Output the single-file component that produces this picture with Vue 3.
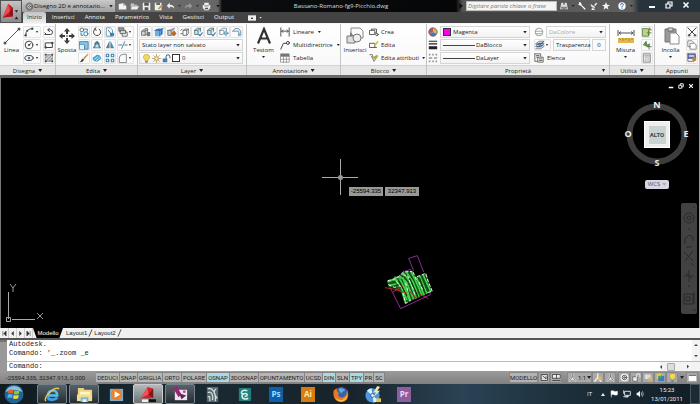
<script setup>
import { h, ref } from 'vue'

const g = (body, color = '#4a4f55', w = 1) =>
  `<g fill="none" stroke="${color}" stroke-width="${w}" stroke-linecap="round" stroke-linejoin="round">${body}</g>`

const glyphs = {
  arc: g('<path d="M2 10C2 5 5 2 10 2"/>', '#3c4248', 1.2) + '<circle cx="2" cy="10" r="1.400" fill="#345"/><circle cx="10" cy="2" r="1.400" fill="#345"/><circle cx="4" cy="4.500" r="1.200" fill="#345"/>',
  pline: g('<path d="M1 9H8A2.800 2.800 0 0 0 8 3.500H5M3 9L1 7M6.500 1.500L4.500 3.500L6.500 5.500"/>', '#3c4248', 1.200),
  circle: g('<circle cx="6" cy="6" r="4.600"/><path d="M6 6L8.500 4"/>', '#3c4248', 1.200) + '<circle cx="6" cy="6" r="1.200" fill="#345"/>',
  rect: g('<path d="M2 3.500H10V9H2Z"/>', '#3c4248', 1.200) + '<circle cx="2" cy="9" r="1.400" fill="#345"/><circle cx="10" cy="3.500" r="1.400" fill="#345"/>',
  ellipse: g('<ellipse cx="6" cy="6" rx="5" ry="3"/>', '#3c4248', 1.200) + '<circle cx="6" cy="6" r="1.500" fill="#57a"/>',
  hatch: '<path d="M2 2H10V10H2Z" fill="#c9ccd0"/>' + g('<path d="M2 2H10V10H2ZM2 6L6 2M2 10L10 2M6 10L10 6"/>', '#777', 0.8) + '<path d="M1 1h2v2H1zM9 1h2v2H9zM1 9h2v2H1zM9 9h2v2H9z" fill="#444"/>',
  copy: g('<circle cx="3.500" cy="3.500" r="2.300"/>', '#555') + g('<circle cx="8.200" cy="8.200" r="2.500"/><path d="M7 2.500H10V5M2.500 7V10H4.500"/>', '#2b86b8', 1.2),
  rotate: g('<path d="M4 2.200A4.300 4.300 0 1 0 8.500 2.400M4.500 .800L3 2.600L5.200 3.800"/>', '#444', 1.2),
  mirror: g('<path d="M2 1H6.500L9 3.500V11H2Z"/>', '#4a90b8') + '<path d="M6 7h5v4H6z" fill="#3c8cba"/>' + g('<path d="M4 4L8 9"/>', '#555'),
  scale: '<path d="M1 2H11V11H1Z" fill="#8cc5e3"/>' + g('<path d="M1 2H11V11H1ZM1 6H6.500V11"/>', '#2f7ba8') + '<path d="M1 6h5v5H1z" fill="#dff2fb"/>',
  stretch: '<path d="M1 10L3 6V3.500L6 1L9 3.500V6L11 10Z" fill="#54788e"/><path d="M3.500 9L5 5H7L8.500 9Z" fill="#b9e0f2"/>',
  triangle: '<path d="M5.500 1V10H1Z" fill="#777"/><path d="M6.500 1V10H11Z" fill="#3c8cba"/>',
  brush: '<path d="M10.500 1L5 6L6.500 7.500L11.300 1.800Z" fill="#c48a34"/><path d="M1 11L4.500 6.500L6.200 8L4 10.500Z" fill="#333"/>',
  cloud: '<path d="M1 8C0 5 3 4 4 4C5 1 10 2 10 4.500C12 6 11 8 9 8.500C7 11 3 11 1 8Z" fill="#4aa3cf"/>' + g('<path d="M3 7.500L7 4.500M5 9L9 6"/>', '#d9f1fb'),
  array: g('<path d="M1.500 1.500h3v3h-3zM7.500 1.500h3v3h-3zM1.500 7.500h3v3h-3zM7.500 7.500h3v3h-3z"/>', '#3684b0', 1.3),
  stack: '<path d="M1 1H7V5H1Z" fill="#a0a4a8"/><path d="M3 4H9V8H3Z" fill="#d4d6d8"/>' + g('<path d="M1 1H7V4M1 1V5H3M3 4H9V8H3ZM9 6H11V11H5V8"/>', '#555'),
  trim: g('<path d="M1 6H4.500M8 6H11"/>', '#555') + g('<path d="M4.500 10L8 2"/>', '#3c8cba', 1.2),
  fillet: g('<path d="M1.500 11V6A5 5 0 0 1 6.500 1.500H10V11Z"/>', '#777'),
  layers: '<path d="M1 5L5 2H8V8L5 10H1Z" fill="#d0d3d5"/>' + g('<path d="M1 5L5 2H8V8L5 10H1ZM5 3.500V10M1 5H5L8 3"/>', '#666') + '<path d="M7 6h4v5H7z" fill="#777"/>',
  layerBlue: '<path d="M1 4L5 1.500H11V8L7 11H1Z" fill="#75aee0"/>' + g('<path d="M1 4H7V11M7 4L11 1.500M3 3L9 3.200V9"/>', '#3b5f96'),
  layerOrange: '<path d="M1 4L5 1.500H9V7L5 10H1Z" fill="#ced0d2"/>' + g('<path d="M1 4H5V10M5 4L9 1.500M1 4V10H5"/>', '#666') + '<path d="M6 6L9 4.500L11.500 8L8.500 11L6 10Z" fill="#b76b2c"/>',
  layerKey: g('<path d="M4 4H8L10 2.500V8L8 10H4ZM8 4V10M4 4L6 2.500H10M1 4L2.500 2.500M1 8H3"/>', '#666'),
  layerCheck: '<path d="M2 4L5 1.500H9V6L6 9H2Z" fill="#d0e2ea"/>' + g('<path d="M2 4H6V9M6 4L9 1.500M2 4V9H6M2 4L5 1.500H9V5"/>', '#577') + g('<path d="M7 9L8.500 10.500L11 7"/>', '#2b7fb0', 1.4),
  layerSun: g('<path d="M1 4L4 1.500H9V4M1 4H6V9M1 4V9H4"/>', '#789') + g('<circle cx="8.500" cy="7.500" r="2"/><path d="M8.500 4.500V11M5.500 7.500H11.500"/>', '#4a94b8', 0.8),
  layerLock: g('<path d="M1 5L3.500 2H8L10.500 5V9M1 5H8V8"/>', '#6c93b5', 1.2) + '<path d="M7 7h4v4H7z" fill="#8bb3cc"/>',
  bulb: '<path d="M6 .500A3.700 3.700 0 0 0 4 7.500V9H8V7.500A3.700 3.700 0 0 0 6 .500Z" fill="#f7d957" stroke="#a98d33" stroke-width=".7"/><path d="M4.300 9.500H7.700V11.500H4.300Z" fill="#777"/>',
  sun: '<circle cx="6" cy="6" r="2.500" fill="#fff2a0" stroke="#9a7b30"/>' + g('<path d="M6 .800V2M6 10V11.200M.800 6H2M10 6H11.200M2.300 2.300L3.200 3.200M8.800 8.800L9.700 9.700M9.700 2.300L8.800 3.200M3.200 8.800L2.300 9.700"/>', '#a5803a'),
  unlock: '<path d="M1 6H7V11H1Z" fill="#3b83b4"/>' + g('<path d="M5.500 6V3.500A2.300 2.300 0 0 1 10.500 3.500V5"/>', '#456', 1.3),
  dim: g('<path d="M1 1V11M11 1V11M2 5H10M3.500 3.500L2 5L3.500 6.500M8.500 3.500L10 5L8.500 6.500"/>', '#555', 1.2),
  leader: g('<path d="M1 11L4 4H7"/><circle cx="9.500" cy="3.500" r="1.800"/>', '#444', 1.2),
  table: '<path d="M1 1H11V11H1Z" fill="#fff"/><path d="M1 1H11V4H1Z" fill="#777"/>' + g('<path d="M1 1H11V11H1ZM1 4H11M1 7.500H11M4.300 4V11M7.700 4V11"/>', '#777', 0.8),
  blockNew: g('<path d="M1 4H7V9H1ZM3 4V2.500H9V7H7"/><circle cx="9.500" cy="9" r="1.500"/>', '#555', 1.1),
  blockEdit: g('<path d="M1 4H7V9H1ZM7 9H9"/>', '#555', 1.1) + '<path d="M6 6L10 1L11.500 2.500L8 7Z" fill="#d7c43c"/>',
  blockAttr: g('<path d="M1 2L4 2L5 6M3 4L6 10L8 7"/>', '#666') + '<path d="M4 5L10 2L11 4L8 8Z" fill="#a9ae3d"/>',
  wheel: '<path d="M6 6V1A5 5 0 0 1 10.500 8.500Z" fill="#e0b63a"/><path d="M6 6L10.500 8.500A5 5 0 0 1 1.500 8.500Z" fill="#4775c0"/><path d="M6 6L1.500 8.500A5 5 0 0 1 6 1Z" fill="#c05252"/><circle cx="6" cy="6" r="5" fill="none" stroke="#666"/>',
  weight: '<path d="M1 1h10v1H1zM1 4h10v1.500H1zM1 7.500h10v3.500H1z" fill="#222"/>',
  ltype: '<path d="M1 1h2v2H1zM5 1h2v2H5zM9 1h2v2H9zM1 5h4v2H1zM7 5h4v2H7zM1 9h2v2H1zM5 9h2v2H5zM9 9h2v2H9z" fill="#999"/>',
  globe: g('<circle cx="6" cy="6" r="4.500"/><path d="M1.500 5H10.500M2 8H10"/>', '#a8a8a8', 1.3),
  sheets: '<path d="M1 9L5 6H11L7 9ZM1 6L5 3H11L7 6Z" fill="#64a0c4"/>' + g('<path d="M1 10.500H7L11 7.500M1 7.500L5 4.500H11L7 7.500ZM1 4.500L5 1.500H11L7 4.500Z"/>', '#446', 0.8),
  list: g('<path d="M1 1H8V4M1 1V10H4M3 3H6M3 5H5M5 5H11V11H5ZM6.500 7H9.500M6.500 9H9.500"/>', '#555'),
  select: '<path d="M1 2H8V11H1Z" fill="#b9d785"/>' + g('<path d="M1 2H8V11H1ZM6 7H11M8.500 4.500V9.500"/>', '#58753b') + '<path d="M9 0L12 4H8Z" fill="#a78b2a"/>',
  quick: '<path d="M1 6L5 1L6 5L10 4L8 9Z" fill="#75a65d"/>' + g('<path d="M2 6L5 2V7M6 8H11M8.500 5.500V11"/>', '#4f6748'),
  calc: '<path d="M2 1H10V11H2Z" fill="#eee"/>' + g('<path d="M2 1H10V11H2ZM3.500 3.500H8.500M4 6H4.200M6 6H6.200M8 6H8.200M4 8.500H4.200M6 8.500H6.200M8 8.500H8.200"/>', '#777'),
  cut: g('<path d="M1 1L9.500 9.500M11 1L2.500 9.500"/><circle cx="2.500" cy="10" r="1"/><circle cx="9.500" cy="10" r="1"/>', '#444', 1.2),
  pages: '<path d="M1 1H6L8 3V8H1ZM4 4H9L11 6V11H4Z" fill="#fff"/>' + g('<path d="M8 3L6 1H1V8H4M4 4H9L11 6V11H4Z"/>', '#777'),
  match: '<path d="M1 1H10V7H1Z" fill="#55a"/><path d="M2 2h7v3H2z" fill="#aac8e8"/><path d="M6 7L11 3V9L7 11Z" fill="#bf853e"/>' + g('<path d="M1 1H10V5M1 1V10H6"/>', '#556'),
  gear: '<circle cx="6" cy="6" r="4" fill="#ddd"/>' + g('<circle cx="6" cy="6" r="4.700" stroke-dasharray="1.500 1.400"/><circle cx="6" cy="6" r="3.500"/><circle cx="6" cy="6" r="1.300"/>', '#444'),
  newFile: '<path d="M1 2.500L7 1.500L11 5V10H1Z" fill="#f2f2f2"/><path d="M7 1.500V5H11" fill="#aaa"/>',
  open: '<path d="M1 2H5L6 3.500H10V5H3L1 9Z" fill="#c8c8c8"/><path d="M3 5.500H12L9.500 10H1Z" fill="#eee"/>',
  save: '<path d="M1 1H11V11H1Z" fill="#eee"/><path d="M3 1h6v4H3zM3.500 7h5v4h-5z" fill="#555"/>',
  saveAs: '<path d="M1 1H10V11H1Z" fill="#eee"/><path d="M3 1h5v3H3z" fill="#666"/><path d="M5 9L10 3L12 5L7 10Z" fill="#c69b4b"/>',
  undo: '<path d="M1 5L5 1V3.500C9 3.500 11 5 11 9C9 6.500 8 6.300 5 6.500V9Z" fill="#f0f0f0"/>',
  redo: '<path d="M11 5L7 1V3.500C3 3.500 1 5 1 9C3 6.500 4 6.300 7 6.500V9Z" fill="#999"/>',
  print: '<path d="M3 1H9V4H11V9H9V11H3V9H1V4H3Z" fill="#eee"/><path d="M3 4.500h6v1H3zM4 7.500h4v2H4z" fill="#555"/>',
  binoc: '<path d="M2 1H5V4H7V1H10L12 11H7V7H5V11H0Z" fill="#ddd"/><path d="M2 7h2v3H2zM8 7h2v3H8z" fill="#555"/>',
  wrench: '<path d="M1 1L3 0L5 2L5.500 4.500L11.500 10L10 11.500L4.500 5.500L2 5L0 3L2 3Z" fill="#fff"/>',
  dish: '<path d="M1 3L8 8C5 10 1 8 1 3ZM6 5L9 1L11 2L8 6ZM3 9L7 10V12H2Z" fill="#eee"/>',
  star: '<path d="M6 0L7.600 4.200L12 4.400L8.500 7.200L9.700 11.500L6 9L2.300 11.500L3.500 7.200L0 4.400L4.400 4.200Z" fill="#f4f4f4"/>',
  help: '<circle cx="6" cy="6" r="5.500" fill="#fff"/>' + g('<path d="M4 4.300A2 2 0 1 1 6.800 6Q6 6.400 6 7.500M6 9.200V9.400"/>', '#2566a8', 1.5),
  viewMax: '<path d="M0 2h12v8H0z" fill="#eee"/><path d="M4 7.500L6 4.500L8 7.500Z" fill="#333"/>',
  paper: '<path d="M2 2H10V10H2Z" fill="#ddd"/>' + g('<path d="M2 2H10V10H2ZM4 4L8 8V5"/>', '#333'),
  viewports: '<path d="M1 2H11V7H1Z" fill="#eee"/>' + g('<path d="M1 2H11V7H1ZM6 2V7M1 10H11"/>', '#333'),
  compass: g('<path d="M6 1V5L2 10.500M6 5L10 10.500M3.500 8H8.500"/>', '#eee', 2) + g('<path d="M6 1V5L2 10.500M6 5L10 10.500"/>', '#444', 0.8),
  annoSun: g('<path d="M5 1V6L1 11M5 6L9 11"/>', '#eee', 1.8) + '<circle cx="8" cy="7" r="2.500" fill="#efb44d"/>',
  gearLight: '<circle cx="6" cy="6" r="5.300" fill="#eee"/>' + g('<circle cx="6" cy="6" r="3"/><circle cx="6" cy="6" r="1"/>', '#555', 1.2),
  lockLight: '<path d="M1 5H7V11H1Z" fill="#eee" stroke="#555"/>' + g('<path d="M6 5V3A2.200 2.200 0 0 1 10.500 3V5"/>', '#eee', 1.3),
  tray: '<path d="M1 2H9V8H1Z" fill="#ddd"/><path d="M6 6H11V10H6Z" fill="#e6b14e"/>',
  shield: '<path d="M1 1H7V8H1Z" fill="#e7cb45"/><path d="M3 4H11V11H3Z" fill="#3c7cb4"/><path d="M3 4L8 3L6 8Z" fill="#52a454"/>',
  square: '<path d="M1 2H11V10.500H1Z" fill="#fff"/><path d="M1 2H11V4H1Z" fill="#777"/>',
  flag: '<path d="M2 1V11M2 1.500C5 0 7 4 11 2V7C7 9 5 5 2 7Z" fill="#fff" stroke="#fff"/>',
  net: g('<path d="M3 2H11V8H3ZM7 8V10.500H4M1 1V5M1 10H8"/>', '#e8eef2', 1.3),
  sound: '<path d="M1 4H3L6 1V11L3 8H1Z" fill="#fff"/>' + g('<path d="M8 4Q9.500 6 8 8M10 2.500Q12 6 10 9.500"/>', '#dfe7ec', 1)
}

const Ic = (props) =>
  h('svg', { class: 'ic', viewBox: '0 0 12 12', 'aria-hidden': 'true', innerHTML: glyphs[props.n] })
Ic.props = ['n']

const ribbonTabs = ['Inizio', 'Inserisci', 'Annota', 'Parametrico', 'Vista', 'Gestisci', 'Output']
const activeTab = ref('Inizio')

const layerTools = [
  ['layers', 'Proprietà layer'], ['layerBlue', 'Layer corrente'], ['layerOrange', 'Corrispondenza layer'], ['layerKey', 'Layer precedente'],
  ['layerCheck', 'Isola layer'], ['layerCheck', 'Congela layer'], ['layerSun', 'Scongela layer'], ['layerLock', 'Blocca layer']
]

const modes = ref([
  ['DEDUCI', 0], ['SNAP', 0], ['GRIGLIA', 0], ['ORTO', 0], ['POLARE', 0], ['OSNAP', 1], ['3DOSNAP', 0],
  ['OPUNTAMENTO', 0], ['UCSD', 0], ['DIN', 1], ['SLN', 0], ['TPY', 1], ['PR', 0], ['SC', 0]
].map(([name, on]) => ({ name, on: !!on })))

const command = ref('')
</script>

<template>
  <div class="app">
    <header class="top">
      <button class="logo" aria-label="Menu applicazione">
        <svg viewBox="0 0 22 22">
          <path d="M2 17L8 2L13 6V16Z" fill="#c3202a" />
          <path d="M8 2L10 10L2 17Z" fill="#ef4a4c" />
          <path d="M10 10L13 6V16L9 14Z" fill="#8d1119" />
          <path d="M2 17L9 13L12 16Z" fill="#a91620" />
          <path d="M15 9H19L17 11.500ZM15 19L17 16L19 19Z" fill="#222" />
        </svg>
      </button>
      <div class="bars">
        <div class="title-row">
          <div class="mode">
            <Ic n="gear" />
            <select class="pick" aria-label="Area di lavoro"><option>Disegno 2D e annotazio...</option></select>
          </div>
          <div class="quick">
            <button aria-label="Nuovo"><Ic n="newFile" /></button>
            <button aria-label="Apri"><Ic n="open" /></button>
            <button aria-label="Salva"><Ic n="save" /></button>
            <button aria-label="Salva con nome"><Ic n="saveAs" /></button>
            <button class="history-step" aria-label="Annulla"><Ic n="undo" /><i class="caret small"></i></button>
            <button class="history-step" aria-label="Ripeti"><Ic n="redo" /><i class="caret small"></i></button>
            <button aria-label="Stampa"><Ic n="print" /></button>
            <i class="caret dark"></i>
          </div>
          <h1>Bassano-Romano-fg9-Picchio.dwg</h1>
          <div class="search">
            <i class="play"></i>
            <input type="text" aria-label="Cerca" placeholder="Digitare parola chiave o frase">
          </div>
          <div class="helpers">
            <button aria-label="Trova"><Ic n="binoc" /></button>
            <i class="caret small"></i>
            <button aria-label="Strumenti"><Ic n="wrench" /></button>
            <button aria-label="Comunicazioni"><Ic n="dish" /></button>
            <button aria-label="Preferiti"><Ic n="star" /></button>
            <button class="guide" aria-label="Guida"><Ic n="help" /></button>
            <i class="caret small"></i>
          </div>
          <div class="win">
            <button aria-label="Riduci"><svg viewBox="0 0 8 8"><path d="M1 5H7V7H1Z" fill="#fff" /></svg></button>
            <button aria-label="Ripristina"><svg viewBox="0 0 8 8"><path d="M1 3H5V7H1ZM3 3V1H7V5H5" fill="none" stroke="#fff" stroke-width="1.200" /></svg></button>
            <button aria-label="Chiudi"><svg viewBox="0 0 8 8"><path d="M1.500 1.500L6.500 6.500M6.500 1.500L1.500 6.500" stroke="#fff" stroke-width="1.600" /></svg></button>
          </div>
        </div>
        <nav class="tabs">
          <button v-for="t in ribbonTabs" :key="t" :class="{ active: t === activeTab }" @click="activeTab = t">{{ t }}</button>
          <button class="view" aria-label="Riduci barra multifunzione"><Ic n="viewMax" /><i class="caret small"></i></button>
        </nav>
      </div>
    </header>

    <section class="ribbon">
      <div class="panel">
        <div class="body draw">
          <button class="big">
            <svg viewBox="0 0 18 18"><path d="M2 16L16 2" stroke="#555" /><circle cx="2" cy="16" r="1.500" fill="#555" /><circle cx="16" cy="2" r="1.500" fill="#555" /></svg>
            Linea
          </button>
          <div class="pairs">
            <button class="tool split" aria-label="Arco"><Ic n="arc" /><i class="caret"></i></button>
            <button class="tool" aria-label="Polilinea"><Ic n="pline" /></button>
            <button class="tool split" aria-label="Cerchio"><Ic n="circle" /><i class="caret"></i></button>
            <button class="tool" aria-label="Rettangolo"><Ic n="rect" /></button>
            <button class="tool split" aria-label="Ellisse"><Ic n="ellipse" /><i class="caret"></i></button>
            <button class="tool" aria-label="Tratteggio"><Ic n="hatch" /></button>
          </div>
        </div>
        <button class="name">Disegna <i class="caret"></i></button>
      </div>

      <div class="panel">
        <div class="body edit">
          <button class="big">
            <svg viewBox="0 0 18 18"><path d="M9 1L12 4.500H10V7H8V4.500H6ZM9 17L6 13.500H8V11H10V13.500H12ZM1 9L4.500 6V8H7V10H4.500V12ZM17 9L13.500 12V10H11V8H13.500V6Z" fill="#3c3c3c" /><circle cx="9" cy="9" r="1.200" fill="#999" /></svg>
            Sposta
          </button>
          <div class="quads">
            <button class="tool" aria-label="Copia"><Ic n="copy" /></button>
            <button class="tool" aria-label="Ruota"><Ic n="rotate" /></button>
            <button class="tool" aria-label="Specchio"><Ic n="mirror" /></button>
            <button class="tool split" aria-label="Ordine"><Ic n="stack" /><i class="caret"></i></button>
            <button class="tool" aria-label="Scala"><Ic n="scale" /></button>
            <button class="tool" aria-label="Stira"><Ic n="stretch" /></button>
            <button class="tool" aria-label="Rifletti"><Ic n="triangle" /></button>
            <button class="tool split" aria-label="Taglia"><Ic n="trim" /><i class="caret"></i></button>
            <button class="tool" aria-label="Cancella"><Ic n="brush" /></button>
            <button class="tool" aria-label="Offset"><Ic n="cloud" /></button>
            <button class="tool" aria-label="Serie"><Ic n="array" /></button>
            <button class="tool split" aria-label="Raccordo"><Ic n="fillet" /><i class="caret"></i></button>
          </div>
        </div>
        <button class="name">Edita <i class="caret"></i></button>
      </div>

      <div class="panel">
        <div class="body rows">
          <div class="strip">
            <button v-for="([n, label], i) in layerTools" :key="i" class="tool" :aria-label="label"><Ic :n="n" /></button>
          </div>
          <div class="field"><select class="pick" aria-label="Stato layer"><option>Stato layer non salvato</option></select></div>
          <div class="field">
            <Ic n="bulb" /><Ic n="sun" /><Ic n="unlock" /><i class="swatch white"></i>
            <select class="pick" aria-label="Layer corrente"><option>0</option></select>
          </div>
        </div>
        <button class="name">Layer <i class="caret"></i></button>
      </div>

      <div class="panel">
        <div class="body wide">
          <button class="big">
            <svg viewBox="0 0 18 18"><path d="M3 16.500L9 2L15 16.500M5 11.500H13" fill="none" stroke="#333" stroke-width="2.200" /></svg>
            Testom
            <i class="caret"></i>
          </button>
          <div class="list">
            <button><Ic n="dim" />Lineare<i class="caret"></i></button>
            <button><Ic n="leader" />Multidirettrice<i class="caret"></i></button>
            <button><Ic n="table" />Tabella</button>
          </div>
        </div>
        <button class="name">Annotazione <i class="caret"></i></button>
      </div>

      <div class="panel">
        <div class="body block">
          <button class="big">
            <svg viewBox="0 0 18 18"><path d="M5 1H14L17 4V11H5Z" fill="#fafafa" stroke="#888" /><path d="M1 9H9V16H1Z" fill="#ddd" stroke="#777" /><circle cx="11" cy="11" r="4" fill="#eee" stroke="#777" /><path d="M4 5L8 9L4 9Z" fill="#777" /></svg>
            Inserisci
          </button>
          <div class="list">
            <button><Ic n="blockNew" />Crea</button>
            <button><Ic n="blockEdit" />Edita</button>
            <button><Ic n="blockAttr" />Edita attributi<i class="caret"></i></button>
          </div>
        </div>
        <button class="name">Blocco <i class="caret"></i></button>
      </div>

      <div class="panel">
        <div class="body props">
          <div class="rows">
            <div class="line"><Ic n="wheel" /><div class="field"><i class="swatch magenta"></i><select class="pick" aria-label="Colore"><option>Magenta</option></select></div></div>
            <div class="line"><Ic n="weight" /><div class="field"><i class="stroke"></i><select class="pick" aria-label="Spessore linea"><option>DaBlocco</option></select></div></div>
            <div class="line"><Ic n="ltype" /><div class="field"><i class="stroke"></i><select class="pick" aria-label="Tipo di linea"><option>DaLayer</option></select></div></div>
          </div>
          <div class="rows">
            <div class="line"><Ic n="globe" /><div class="field off"><select class="pick" aria-label="Stile di stampa" disabled><option>DaColore</option></select></div></div>
            <div class="line">
              <button class="tool split" aria-label="Trasparenza layer"><Ic n="sheets" /><i class="caret"></i></button>
              <label class="field trans" for="transparency"><b></b>Trasparenza</label>
              <input id="transparency" class="amount" type="text" value="0">
            </div>
            <div class="list"><button><Ic n="list" />Elenca</button></div>
          </div>
        </div>
        <button class="name">Proprietà <i class="caret corner"></i></button>
      </div>

      <div class="panel">
        <div class="body side">
          <button class="big">
            <svg viewBox="0 0 18 18"><path d="M1 3V9M17 3V9M2 6H16M4 4.500L2 6L4 7.500M14 4.500L16 6L14 7.500" fill="none" stroke="#555" /><path d="M1 11H17V16H1Z" fill="#e2b64a" /><path d="M3 11V13M6 11V14M9 11V13M12 11V14M15 11V13" stroke="#a67c20" stroke-width=".8" /></svg>
            Misura
            <i class="caret"></i>
          </button>
          <div class="rows">
            <button class="tool" aria-label="Selezione"><Ic n="select" /></button>
            <button class="tool" aria-label="Selezione rapida"><Ic n="quick" /></button>
            <button class="tool" aria-label="Calcolatrice"><Ic n="calc" /></button>
          </div>
        </div>
        <button class="name">Utilità <i class="caret"></i></button>
      </div>

      <div class="panel">
        <div class="body side">
          <button class="big">
            <svg viewBox="0 0 18 18"><path d="M3 2H14V15H3Z" fill="#999" stroke="#777" /><path d="M6 1H11V4H6Z" fill="#ddd" stroke="#666" /><path d="M8 6H14L17 9V17H8Z" fill="#fdfdfd" stroke="#888" /></svg>
            Incolla
            <i class="caret"></i>
          </button>
          <div class="rows">
            <button class="tool" aria-label="Taglia"><Ic n="cut" /></button>
            <button class="tool" aria-label="Copia negli appunti"><Ic n="pages" /></button>
            <button class="tool" aria-label="Corrispondenza proprietà"><Ic n="match" /></button>
          </div>
        </div>
        <button class="name">Appunti</button>
      </div>
    </section>

    <main class="canvas">
      <div class="doc-buttons">
        <button aria-label="Riduci disegno"><svg viewBox="0 0 8 8"><path d="M1 5H7V7H1Z" fill="#fff" /></svg></button>
        <button aria-label="Ripristina disegno"><svg viewBox="0 0 8 8"><path d="M1 3H5V7H1ZM3 3V1H7V5H5" fill="none" stroke="#fff" stroke-width="1.200" /></svg></button>
        <button aria-label="Chiudi disegno"><svg viewBox="0 0 8 8"><path d="M1.500 1.500L6.500 6.500M6.500 1.500L1.500 6.500" stroke="#fff" stroke-width="1.500" /></svg></button>
      </div>

      <div class="viewcube">
        <svg viewBox="0 0 66 66"><circle cx="33" cy="33" r="27.500" fill="none" stroke="#3d3d3d" stroke-width="6" /></svg>
        <span class="n">N</span><span class="e">E</span><span class="s">S</span><span class="w">O</span>
        <button class="cube"><span>ALTO</span></button>
      </div>
      <button class="wcs">WCS <i></i></button>

      <div class="navbar">
        <svg viewBox="0 0 16 111" fill="none" stroke="#292929">
          <circle cx="8" cy="15" r="5" /><circle cx="8" cy="15" r="2" />
          <path d="M7 26H9M4 41V36Q8 30 12 34V38M5 44H11M3 49L12 58M12 48L4 58M10 60L13 63M8 67V79M3 73H13M5 70L11 76M7 83H9M3 91H12V101H3ZM5 94H9V98H5ZM13 89V101M12 3L14 5M12 107H15" />
        </svg>
      </div>

      <svg class="cross" viewBox="0 0 38 38"><path d="M19.500 1V37M1 19.500H37" stroke="#aaa" fill="none" /><circle cx="19.500" cy="19.500" r="2.500" fill="#999" /></svg>
      <div class="coords"><span>-25594.335</span><span>32347.913</span></div>

      <svg class="drawing" viewBox="0 0 210 195" fill="none">
        <g stroke="#8a2b9a" stroke-width="3">
          <path d="M116 62L101 25L127 17L146 66" />
          <path d="M36 95L75 78L83 66L108 58M38 98L77 176L166 134L152 70" />
        </g>
        <path d="M38 94L72 80L84 64L112 62L124 80L154 70L172 124L156 130L90 162L80 130L58 114L40 110Z" fill="#174f1d" />
        <g stroke="#42d24b" stroke-width="5">
          <path d="M38 96L60 86L78 112L96 150M50 90L76 90L90 118L104 152M58 82L84 84L106 150M74 78L94 96L116 148M84 68L104 94L124 146M94 66L114 96L132 142M108 66L120 88L142 138M124 82L148 136M134 78L156 132M144 74L168 126M42 106L64 102M82 128L92 160" />
        </g>
        <g stroke="#e6f7e4" stroke-width="3">
          <path d="M38 92L56 88L70 80L86 66L112 64M40 104L58 112L70 110M82 74L98 78L110 108M114 66L126 94M92 98L100 128M132 96L144 122M126 80L152 70L160 96L172 124L156 128M64 94L80 116M84 128L92 160L108 150M112 110L120 136" stroke-dasharray="10 5" />
        </g>
        <path d="M104 84L130 142M68 86L96 138M134 84L150 128" stroke="#0d2c10" stroke-width="3" />
        <path d="M30 113L60 118L96 130M126 128L160 146M54 126L84 108M104 124L126 146" stroke="#b02c28" stroke-width="3" />
      </svg>

      <svg class="ucs" viewBox="0 0 40 42" fill="none" stroke="#aaa"><path d="M2.500 36V9M6 36.500H29M.500 34.500H4.500V38.500H.500Z" /><path d="M4 1L7 5L10 1M7 5V9M31 30L37 36M37 30L31 36" stroke="#999" /></svg>
    </main>

    <nav class="layouts">
      <div class="steps">
        <button aria-label="Primo"><svg viewBox="0 0 6 6"><path d="M1 0V6M5 0L2 3L5 6Z" fill="#333" stroke="#333" stroke-width=".6" /></svg></button>
        <button aria-label="Precedente"><svg viewBox="0 0 6 6"><path d="M4.500 0L1.500 3L4.500 6Z" fill="#333" /></svg></button>
        <button aria-label="Successivo"><svg viewBox="0 0 6 6"><path d="M1.500 0L4.500 3L1.500 6Z" fill="#333" /></svg></button>
        <button aria-label="Ultimo"><svg viewBox="0 0 6 6"><path d="M5 0V6M1 0L4 3L1 6Z" fill="#333" stroke="#333" stroke-width=".6" /></svg></button>
      </div>
      <button class="sheet current">Modello</button>
      <button class="sheet">Layout1</button><i class="slash"></i>
      <button class="sheet">Layout2</button><i class="slash"></i>
    </nav>

    <section class="command">
      <div class="grip"></div>
      <div class="console">
        <div class="history">
          <p>Autodesk.</p>
          <p>Comando: '_.zoom _e</p>
        </div>
        <div class="vscroll"><i class="up"></i><i class="down"></i></div>
        <div class="prompt">
          <label for="cmd">Comando:</label>
          <input id="cmd" v-model="command" type="text">
        </div>
        <div class="hscroll"><i class="left"></i><b></b><i class="right"></i></div>
      </div>
    </section>

    <footer class="status">
      <span class="position">-25594.335, 32347.913, 0.000</span>
      <div class="modes">
        <button v-for="m in modes" :key="m.name" :class="{ on: m.on }" @click="m.on = !m.on">{{ m.name }}</button>
      </div>
      <div class="tools">
        <button class="model">MODELLO</button>
        <button aria-label="Layout"><Ic n="paper" /></button>
        <button aria-label="Finestre"><Ic n="viewports" /></button>
        <button class="ratio"><Ic n="compass" />1:1<i class="caret"></i></button>
        <button aria-label="Visibilità"><Ic n="annoSun" /></button>
        <button aria-label="Scala automatica"><Ic n="compass" /></button>
        <button class="apart" aria-label="Area di lavoro"><Ic n="gearLight" /></button>
        <button aria-label="Blocca"><Ic n="lockLight" /></button>
        <button aria-label="Hardware"><Ic n="tray" /></button>
        <button aria-label="Stato"><Ic n="shield" /></button>
        <button aria-label="Isola"><Ic n="bulb" /></button>
        <i class="caret apart"></i>
        <button class="apart" aria-label="Pulisci schermo"><Ic n="square" /></button>
      </div>
    </footer>

    <footer class="taskbar">
      <button class="start" aria-label="Start">
        <svg viewBox="0 0 20 20"><circle cx="10" cy="10" r="9.500" fill="#1f6597" /><path d="M1.500 8A9 9 0 0 1 18.500 8Q10 4 1.500 8Z" fill="#8cc0dd" /><path d="M4.500 6Q7 4.500 9.300 6L8.800 9.500Q6.500 8.500 4 9.500Z" fill="#e8632c" /><path d="M10.300 6.500Q13 7.500 15.500 6L15 9.500Q12.500 11 9.800 10Z" fill="#8fc63f" /><path d="M3.800 10.500Q6.500 9.500 8.600 10.500L8 14Q6 13 3.500 14Z" fill="#4db4ea" /><path d="M9.600 11Q12 12 14.800 10.800L14.200 14.200Q11.500 15.500 9 14.500Z" fill="#fbd13c" /></svg>
      </button>
      <div class="apps">
        <button class="open" aria-label="Internet Explorer"><svg viewBox="0 0 18 18"><path d="M4 11C4 15 11 16 14 12" fill="none" stroke="#36a3e6" stroke-width="3" /><path d="M4 10H14C14 3 5 3 4 10" fill="none" stroke="#58bdf1" stroke-width="2.600" /><path d="M2 16C-1 12 11 0 16 3" fill="none" stroke="#e8c547" stroke-width="1.500" /></svg></button>
        <button class="open" aria-label="Esplora risorse"><svg viewBox="0 0 18 18"><path d="M2 2H8L9 4H17V16H2Z" fill="#ecd27b" /><path d="M4 6H15V12H4Z" fill="#fff4c6" /><path d="M1 9H17V16H1Z" fill="#f1dd90" /><path d="M5 12H13V17H5Z" fill="#77b6d9" /><path d="M7 14H11V17H7Z" fill="#e8f4fa" /></svg></button>
        <button aria-label="Media Player"><svg viewBox="0 0 18 18"><path d="M2 3H16V16H2Z" fill="#7bacc9" /><circle cx="9" cy="9" r="6" fill="#ee8127" /><path d="M7 5.500L13 9L7 12.500Z" fill="#fff" /></svg></button>
        <button class="open focus" aria-label="AutoCAD"><svg viewBox="0 0 18 18"><path d="M1 13L8 1L14 3L12 13Z" fill="#c9222b" /><path d="M1 13L8 1L9 9Z" fill="#ec5558" /><path d="M9 9L14 3V13Z" fill="#871119" /><path d="M2 14H17V17H2Z" fill="#111" /><path d="M2 14H9V17H2Z" fill="#eee" /></svg></button>
        <button class="open" aria-label="Editor"><svg viewBox="0 0 18 18"><path d="M3 4H16V15H3Z" fill="#eee3ef" /><path d="M1 2L5 0L10 9L7 12Z" fill="#9b2574" /><path d="M8 8L15 10L10 14Z" fill="#5d2352" /><circle cx="13" cy="6" r="1.500" fill="#c04c91" /></svg></button>
        <button aria-label="Maya"><svg viewBox="0 0 18 18"><path d="M3 1H15V17H3Z" fill="#5a686e" /><path d="M4 3C9 1 13 8 12 16M4 7C8 5 10 10 9 15M13 3Q8 6 14 13M4 12Q7 9 6 16" fill="none" stroke="#d4dfe1" stroke-width="1.300" /></svg></button>
        <button aria-label="3ds Max"><svg viewBox="0 0 18 18"><rect x="3" y="2" width="13" height="14" rx="1" fill="#227d7b" /><path d="M12 5C7 3 4 7 7 9C5 13 9 15 13 13M7 9C12 6 14 11 9 11" fill="none" stroke="#d6f1ec" stroke-width="1.600" /></svg></button>
        <button><b class="tile ps">Ps</b></button>
        <button><b class="tile ai">Ai</b></button>
        <button aria-label="Firefox"><svg viewBox="0 0 18 18"><circle cx="10" cy="8" r="7" fill="#3762a9" /><path d="M7 3Q12 1 14 5Q11 5 10 8Q7 6 7 3Z" fill="#6ca8dc" /><path d="M2 4C0 12 4 17 10 17C16 17 19 11 16 4C16 10 13 13 9 12C6 11 6 8 8 8C5 6 5 4 5 2C3 3 3 5 2 4Z" fill="#e97820" /><path d="M3 12C8 17 14 15 16 9C17 16 7 20 3 12Z" fill="#f8bd42" /></svg></button>
        <button aria-label="Daemon Tools"><svg viewBox="0 0 18 18"><circle cx="9" cy="10" r="7.500" fill="#5297de" /><path d="M9 10L3 5A7.500 7.500 0 0 1 8 2.500ZM9 10L15 15A7.500 7.500 0 0 1 10 17.500Z" fill="#d9edff" /><circle cx="9" cy="10" r="2" fill="#e7f5ff" stroke="#225697" /><path d="M14 0L10 7H13L9 13L17 5H14L17 1Z" fill="#f4e9a4" /><path d="M13 13H18V17H13Z" fill="#e0c54c" /></svg></button>
        <button><b class="tile pr">Pr</b></button>
      </div>
      <div class="systray">
        <span class="lang">IT</span>
        <i class="caret rise"></i>
        <Ic n="flag" /><Ic n="net" /><Ic n="sound" />
        <time datetime="2011-01-13T15:23">15:23<br>13/01/2011</time>
        <button class="peek" aria-label="Mostra desktop"></button>
      </div>
    </footer>
  </div>
</template>

<style>
body { margin: 0; background: #000; }
</style>

<style scoped>
.app {
  display: flex;
  flex-direction: column;
  min-height: 100vh;
  font-family: "Open Sans", "Noto Sans", sans-serif;
  font-size: 6px;
  line-height: 8px;
  color: #222;
  background: #4b4b4b;
}
.app * { box-sizing: border-box; }
button, input, select { font: inherit; color: inherit; margin: 0; padding: 0; border: 0; background: none; border-radius: 0; }
button { display: flex; align-items: center; justify-content: center; white-space: nowrap; }
input, select { min-width: 0; outline: none; }
svg { display: block; flex: none; }
.ic { width: 10px; height: 10px; }
.caret { flex: none; width: 4px; height: 3px; background: currentColor; clip-path: polygon(0 0, 100% 0, 50% 100%); }
.small { width: 3px; height: 2px; }

.top { display: flex; height: 23px; background: #434343; }
.logo { width: 22px; background: linear-gradient(#c4c4c4, #8b8b8b); border: 1px solid #555; }
.logo svg { width: 20px; height: 20px; }
.bars { flex: 1; min-width: 0; }
.title-row { display: flex; height: 12px; background: linear-gradient(90deg, #777 0, #666 196px, #0b0d10 200px, #050607 64%, #555 65%, #5f5f5f 90%, #27343c 91%); }
.mode { display: flex; align-items: center; width: 93px; padding: 0 2px 0 3px; background: linear-gradient(#c9c9c9, #a0a0a0); color: #111; }
.mode .ic { width: 9px; height: 9px; }
.pick {
  flex: 1;
  height: 100%;
  appearance: none;
  text-overflow: ellipsis;
}
.mode::after, .field:not(.trans)::after {
  content: "";
  width: 4px;
  height: 3px;
  flex: none;
  background: #222;
  clip-path: polygon(0 0, 100% 0, 50% 100%);
  pointer-events: none;
}
.quick { display: flex; align-items: center; gap: 3px; padding: 0 3px; color: #333; }
.quick .ic { width: 9px; height: 9px; }
.quick .dark { color: #111; margin-left: 2px; }
.history-step { gap: 3px; }
h1 { flex: 1; min-width: 0; margin: 0; text-align: center; font-size: 6px; line-height: 12px; font-weight: 400; color: #ddd; }
.search { display: flex; align-items: center; gap: 3px; width: 98px; }
.search input { flex: 1; height: 10px; padding: 0 1px; background: #f5f5f5; border: 1px solid #bbb; font-style: italic; }
.search input::placeholder { color: #777; opacity: 1; }
.play { width: 4px; height: 6px; background: #111; clip-path: polygon(0 0, 100% 50%, 0 100%); }
.helpers { display: flex; align-items: center; justify-content: space-between; width: 79px; padding: 0 3px; color: #222; }
.helpers .ic { width: 8px; height: 8px; }
.guide { margin-left: 5px; }
.win { display: flex; align-items: center; justify-content: space-between; width: 64px; padding: 0 10px 2px 12px; }
.win svg { width: 8px; height: 8px; }

.tabs { display: flex; height: 11px; padding-left: 1px; gap: 2px; color: #f4f4f4; }
.tabs button { padding: 0 4px; line-height: 11px; }
.tabs .active { background: linear-gradient(#c4c4c4, #efefef); color: #222; border-radius: 2px 2px 0 0; }
.tabs .view { gap: 3px; margin-left: 4px; }
.tabs .view .ic { width: 8px; height: 8px; }

.ribbon {
  display: grid;
  grid-template-columns: 56fr 82fr 109fr 94fr 86fr 183fr 45fr 45fr;
  height: 55px;
  padding-top: 1px;
  background: #f4f4f4;
  border-bottom: 3px solid #686868;
}
.panel { display: flex; flex-direction: column; min-width: 0; border-right: 1px solid #c4c4c4; background: linear-gradient(#fff, #f7f7f7); }
.body { display: grid; flex: 1; min-width: 0; padding-top: 2px; }
.name { gap: 3px; height: 10px; background: #e7e7e7; border-top: 1px solid #d4d4d4; position: relative; }
.name .corner { position: absolute; right: 4px; width: 3px; }
.big { flex-direction: column; justify-content: flex-start; padding-top: 1px; }
.big svg { width: 18px; height: 18px; margin-bottom: 1px; }
.big .caret { width: 3px; height: 2px; margin-top: 2px; }
.draw { grid-template-columns: 23fr 32fr; }
.pairs { display: grid; grid-template-columns: 18px 12px; grid-auto-rows: 13px; gap: 0 2px; }
.edit { grid-template-columns: 22fr 59fr; }
.quads { display: grid; grid-template-columns: 12px 12px 12px 17px; grid-auto-rows: 13px; column-gap: 1px; }
.tool { height: 12px; border: 1px solid #e3e3e3; background: #fbfbfb; border-radius: 1px; }
.split { justify-content: space-between; padding: 0 2px 0 0; }
.split .caret { width: 2px; height: 2px; }
.wide { grid-template-columns: 33fr 60fr; }
.block { grid-template-columns: 28fr 57fr; }
.rows { display: grid; grid-auto-rows: 12px; row-gap: 1px; padding-left: 1px; padding-right: 3px; min-width: 0; align-content: start; }
.strip { display: flex; justify-content: space-between; }
.strip .tool { width: 13px; }
.field { display: flex; flex: 1; align-items: center; gap: 1px; min-width: 0; height: 12px; padding: 0 2px; border: 1px solid #d5d5d5; background: linear-gradient(#fff, #f2f2f2); }
.field .ic { width: 9px; height: 9px; }
.swatch { flex: none; width: 8px; height: 8px; margin-right: 1px; border: 1px solid #333; }
.white { background: #fff; }
.magenta { background: #f0e; }
.stroke { flex: none; width: 32px; height: 1px; background: #444; }
.list { display: grid; grid-auto-rows: 12px; row-gap: 1px; align-content: start; }
.list button { justify-content: flex-start; gap: 3px; }
.list .caret { width: 3px; height: 2px; margin-left: 1px; }
.block .list button { gap: 2px; }
.props { grid-template-columns: 106fr 76fr; }
.line { display: flex; align-items: center; gap: 2px; min-width: 0; }
.off { color: #aaa; }
.off .pick { opacity: 1; }
.line .split { width: 17px; }
.trans { gap: 1px; padding: 0 1px; }
.trans b { width: 2px; height: 8px; background: #bbb; }
.amount { width: 14px; height: 12px; border: 1px solid #d5d5d5; background: #fafafa; text-align: center; }
.side { grid-template-columns: minmax(0, 31fr) minmax(0, 13fr); }
.side .rows { padding: 0 1px 0 0; }
.side .tool { width: 12px; }

.canvas { position: relative; flex: 1; background: #000; border-left: 1px solid #777; border-right: 1px solid #999; }
.doc-buttons { position: absolute; top: 5px; right: 5px; display: flex; gap: 4px; }
.doc-buttons svg { width: 6px; height: 6px; }
.viewcube { position: absolute; top: 23px; right: 9px; width: 66px; height: 66px; color: #eee; font-weight: 700; font-size: 9px; line-height: 10px; }
.viewcube svg { width: 66px; height: 66px; }
.viewcube span { position: absolute; width: 10px; text-align: center; }
.viewcube .n { top: -1px; left: 28px; }
.viewcube .s { bottom: -1px; left: 28px; }
.viewcube .e { top: 28px; right: -1px; }
.viewcube .w { top: 28px; left: -1px; }
.cube { position: absolute; top: 20px; left: 20px; width: 26px; height: 27px; background: #eee; border: 1px solid #fff; }
.viewcube .cube span { position: static; width: 17px; height: 18px; background: #c7d4d1; color: #3a4744; font-family: Roboto, sans-serif; font-size: 6px; line-height: 18px; }
.wcs { position: absolute; top: 102px; right: 30px; height: 9px; width: 24px; gap: 2px; background: #d8d6e4; border-radius: 2px; color: #555; line-height: 9px; }
.wcs i { width: 4px; height: 3px; background: #aaa; clip-path: polygon(0 0, 100% 0, 50% 100%); }
.navbar { position: absolute; top: 125px; right: 2px; width: 16px; background: #424242; border-radius: 2px; }
.navbar svg { width: 16px; height: 111px; }
.cross { position: absolute; left: 320px; top: 80px; width: 38px; height: 38px; }
.coords { position: absolute; left: 348px; top: 109px; display: flex; gap: 2px; color: #000; line-height: 9px; font-family: "Liberation Sans", sans-serif; }
.coords span { width: 34px; text-align: center; background: #999; }
.drawing { position: absolute; left: 374px; top: 172px; width: 70px; height: 65px; }
.ucs { position: absolute; left: 5px; bottom: 3px; width: 40px; height: 42px; }

.layouts { display: flex; align-items: center; height: 12px; padding-left: 1px; background: #f0f0f0; border-bottom: 2px solid #555; color: #222; font-family: "Liberation Sans", sans-serif; }
.steps { display: flex; align-self: stretch; }
.steps button { width: 8px; border-right: 1px solid #ccc; }
.steps svg { width: 5px; height: 5px; }
.sheet { height: 10px; padding: 0 3px; }
.current { width: 30px; background: #000; color: #fff; clip-path: polygon(0 0, 100% 0, 88% 100%, 12% 100%); }
.slash { width: 1px; height: 8px; background: #555; transform: rotate(24deg); }

.command { display: flex; background: #999; font-family: "Liberation Mono", monospace; font-size: 7px; line-height: 9px; color: #222; }
.grip { width: 7px; border-top: 2px solid #777; }
.console { display: grid; flex: 1; grid-template-columns: minmax(0, 1fr) 40px; grid-template-rows: 22px 9px; background: #fff; position: relative; }
.history { grid-column: 1 / 3; padding: 0 2px; border-bottom: 1px solid #bbb; }
.history p { margin: 0; }
.vscroll { position: absolute; right: 0; top: 0; display: flex; flex-direction: column; justify-content: space-between; align-items: center; width: 8px; height: 21px; padding: 4px 0; background: #f3f3f3; }
.up, .down { width: 4px; height: 2px; background: #444; clip-path: polygon(0 0, 100% 0, 50% 100%); }
.up { transform: rotate(180deg); }
.prompt { display: flex; padding-left: 2px; }
.prompt input { flex: 1; height: 9px; }
.hscroll { display: flex; align-items: center; justify-content: space-between; background: #f3f3f3; padding-right: 11px; }
.hscroll b { width: 8px; height: 8px; margin-right: 8px; background: #ddd; border: 1px solid #aaa; border-radius: 1px; }
.left, .right { width: 2px; height: 4px; background: #444; clip-path: polygon(0 0, 100% 50%, 0 100%); }
.left { transform: rotate(180deg); }

.status { display: flex; align-items: center; height: 13px; background: linear-gradient(#9b9b9b, #808080); color: #222; font-family: Roboto, sans-serif; }
.position { width: 96px; padding-left: 6px; white-space: nowrap; }
.modes { display: grid; grid-template-columns: 24px 18px 25px 19px 25px 23px 29px 46px 18px 13px 14px 14px 10px 11px; }
.modes button { height: 11px; border: 1px solid #858585; border-left: 0; background: #b6b6b6; overflow: hidden; }
.modes .on { background: #a9d9e5; }
.tools { display: flex; align-items: center; margin-left: auto; padding-right: 2px; }
.tools button { width: 12px; height: 11px; background: #a9a9a9; border: 1px solid #888; }
.tools .ic { width: 9px; height: 9px; }
.tools .model { width: 29px; background: #b3b3b3; }
.tools .ratio { width: 25px; gap: 1px; margin-left: 5px; }
.apart { margin-left: 2px; }

.taskbar { display: flex; height: 20px; background: linear-gradient(90deg, #111b20, #1a2a33 25%, #18232b 50%, #2a4355 66%, #1d303c 80%, #121d24); }
.start { width: 27px; }
.start svg { width: 20px; height: 20px; }
.apps { display: flex; gap: 2px; padding-left: 10px; }
.apps button { width: 30px; height: 20px; }
.apps svg { width: 17px; height: 17px; }
.apps .open { background: linear-gradient(#56626a, #252d32); border: 1px solid #77828a; border-radius: 2px; }
.apps .focus { background: linear-gradient(#b4b8ba, #6d7375); border-color: #ccc; }
.tile { width: 14px; height: 15px; font-size: 8px; line-height: 14px; text-align: center; }
.ps { background: #0d5fa8; color: #a5dcff; }
.ai { background: #d87c0d; color: #ffe9a8; }
.pr { background: #8d5d9e; color: #eed9f5; }
.systray { display: flex; align-items: center; gap: 5px; margin-left: auto; color: #e8eef2; }
.systray .ic { width: 8px; height: 8px; }
.lang { margin-right: 4px; }
.rise { transform: rotate(180deg); }
time { width: 36px; text-align: center; line-height: 9px; font-family: Roboto, sans-serif; }
.peek { width: 10px; height: 20px; border: 1px solid #47555e; background: #1c2a32; }
</style>
